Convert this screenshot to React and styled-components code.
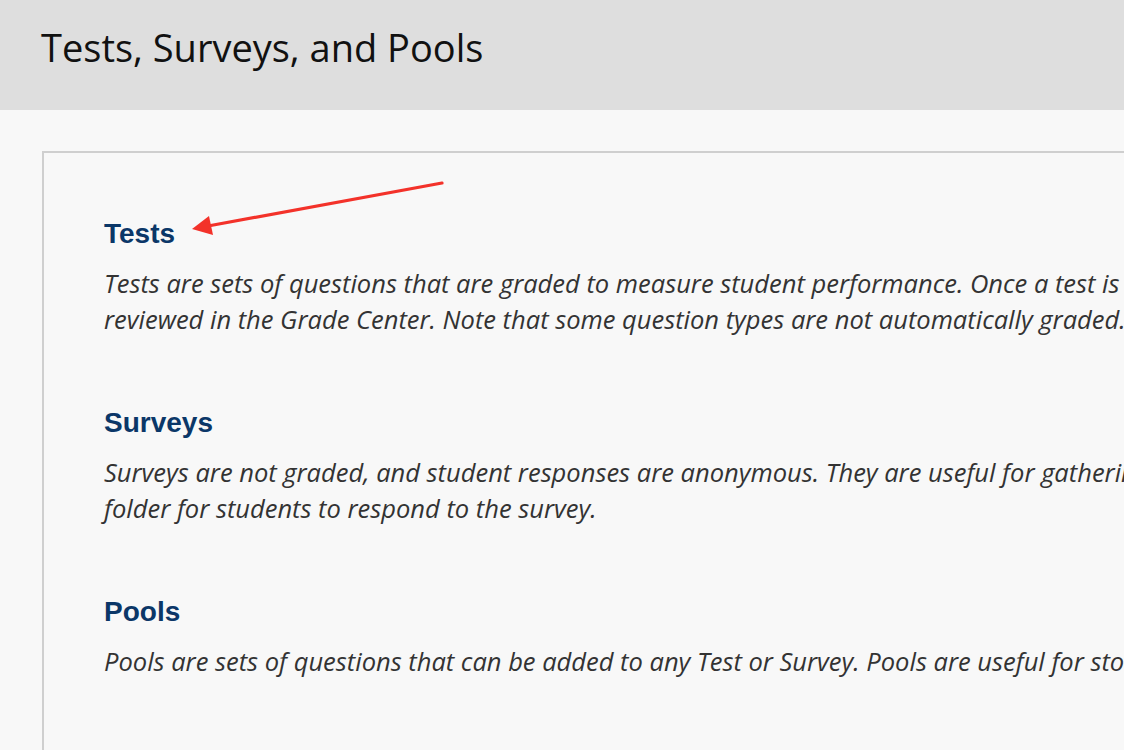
import React from 'react';
import styled, { createGlobalStyle } from 'styled-components';

const GlobalStyle = createGlobalStyle`
	html, body {
		margin: 0;
		padding: 0;
		background: #f8f8f8;
		overflow: hidden;
	}
`;

const Page = styled.div`
	width: 1124px;
	height: 750px;
	overflow: hidden;
	background: #f8f8f8;
`;

const Header = styled.header`
	height: 110px;
	background: #dedede;
	display: flex;
	align-items: center;
	padding-left: 41px;
	box-sizing: border-box;
`;

const Title = styled.h1`
	margin: 0 0 16px;
	font-family: 'Open Sans', sans-serif;
	font-weight: 400;
	font-size: 38px;
	color: #111;
`;

const Content = styled.main`
	padding: 41px 0 0 42px;
`;

const Panel = styled.section`
	position: relative;
	border-left: 2px solid #cfcfcf;
	border-top: 2px solid #cfcfcf;
	width: 1200px;
	height: 700px;
	padding: 65px 0 0 60px;
	box-sizing: border-box;
`;

const Item = styled.div`
	margin-bottom: 70px;
`;

const Heading = styled.h3`
	margin: 0 0 15px;
	font-family: 'Liberation Sans', Arial, sans-serif;
	font-weight: 700;
	font-size: 28px;
	line-height: 32px;
	color: #0b3768;
`;

const Description = styled.p`
	margin: 0;
	font-family: 'Open Sans', sans-serif;
	font-style: italic;
	font-size: 25.5px;
	line-height: 36px;
	color: #333;
	white-space: nowrap;
`;

const Arrow = styled.svg`
	position: absolute;
	left: 140px;
	top: 20px;
	overflow: visible;
`;

const items = [
	{
		title: 'Tests',
		lines: [
			'Tests are sets of questions that are graded to measure student performance. Once a test is created, it',
			'reviewed in the Grade Center. Note that some question types are not automatically graded.',
		],
	},
	{
		title: 'Surveys',
		lines: [
			'Surveys are not graded, and student responses are anonymous. They are useful for gathering information',
			'folder for students to respond to the survey.',
		],
	},
	{
		title: 'Pools',
		lines: ['Pools are sets of questions that can be added to any Test or Survey. Pools are useful for storing questions'],
	},
];

export default function App() {
	return (
		<Page>
			<GlobalStyle />
			<Header>
				<Title>Tests, Surveys, and Pools</Title>
			</Header>
			<Content>
				<Panel>
					<Arrow width="300" height="80">
						<line x1="258" y1="10" x2="24" y2="53" stroke="#f3322a" strokeWidth="3.2" strokeLinecap="round" />
						<polygon points="8,56 25,43 29,62" fill="#f3322a" />
					</Arrow>
					{items.map((item) => (
						<Item key={item.title}>
							<Heading>{item.title}</Heading>
							{item.lines.map((line) => (
								<Description key={line}>{line}</Description>
							))}
						</Item>
					))}
				</Panel>
			</Content>
		</Page>
	);
}
